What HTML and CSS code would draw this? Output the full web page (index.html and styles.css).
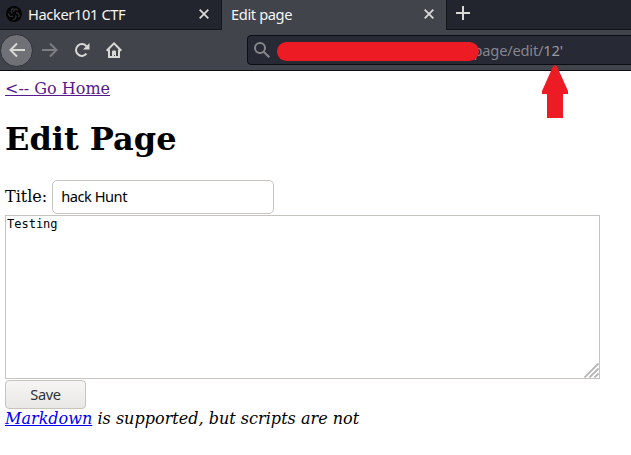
FILE: index.html
```html
<!DOCTYPE html>
<html lang="en">
<head>
<meta charset="utf-8">
<title>Edit page</title>
<link rel="stylesheet" href="styles.css">
</head>
<body>
<header class="browser">
  <div class="tabs">
    <div class="tab">
      <svg class="favicon" width="16" height="16" viewBox="0 0 16 16"><circle cx="8" cy="8" r="8" fill="#050506"/><g fill="none" stroke="#303135" stroke-width="1.3"><path d="M8 5.800C7 3.500 9.500 2 12 4M10 7c2.500-.6 4 2 2.500 4M9.500 9.500c1.500 2-.5 4.300-3 4M7 10c-2 1.600-4.500 0-4.500-2.500M6 7.500C4.500 5.500 5 3 7.500 2.500"/></g></svg>
      <span class="tab-name">Hacker101 CTF</span>
      <svg class="close" width="10" height="10" viewBox="0 0 10 10"><path d="M.7.7l8.600 8.600M9.300.7L.7 9.300"/></svg>
    </div>
    <div class="tab active">
      <span class="tab-name">Edit page</span>
      <svg class="close" width="10" height="10" viewBox="0 0 10 10"><path d="M.7.7l8.600 8.600M9.300.7L.7 9.300"/></svg>
    </div>
    <div class="new-tab"><svg width="14" height="14" viewBox="0 0 14 14"><path d="M7 0v14M0 7h14"/></svg></div>
  </div>
  <div class="toolbar">
    <div class="back"><svg width="16" height="16" viewBox="0 0 16 16"><path d="M16 8H1.500M8 1.500L1.500 8 8 14.500"/></svg></div>
    <svg class="forward" width="16" height="16" viewBox="0 0 16 16"><path d="M0 8h14.500M8 1.500L14.500 8 8 14.500"/></svg>
    <svg class="reload" width="16" height="16" viewBox="0 0 16 16"><path d="M12.500 11.700A5.900 5.900 0 1 1 12.500 4.300"/><path class="solid" d="M15.500 1v6.500H9z"/></svg>
    <svg class="home" width="16" height="16" viewBox="0 0 16 16"><path d="M.7 8.700L8 1.400l7.300 7.300M3 7.500V15h10V7.500"/><path class="solid" d="M6 15V9.500Q6 8.500 7 8.500h2q1 0 1 1V15H9v-2H8v2z"/></svg>
    <div class="address">
      <svg class="search" width="16" height="16" viewBox="0 0 16 16"><circle cx="6" cy="6" r="5"/><path d="M9.700 9.700l5.600 5.600"/></svg>
      <div class="redaction"></div>
      <span class="url">page/edit/<span class="url-end">12'</span></span>
    </div>
  </div>
</header>
<svg class="pointer" width="26" height="54" viewBox="0 0 26 54"><path d="M13 0q1.500 0 2.500 2.500L26 26v3h-5v24H5V29H0v-3L10.500 2.500Q11.500 0 13 0z"/></svg>
<main class="page">
  <a class="go-home" href="#">&lt;-- Go Home</a>
  <h1>Edit Page</h1>
  <form>
    <div class="title-row"><label for="title">Title:</label><input id="title" type="text" value="hack Hunt"></div>
    <div class="editor">
      <textarea>Testing</textarea>
      <svg class="grip" width="15" height="15" viewBox="0 0 15 15"><path d="M.5 14.500L14.500.5M5.500 14.500l9-9M10.500 14.500l4-4"/></svg>
    </div>
    <button type="button">Save</button>
  </form>
  <p class="note"><a href="#">Markdown</a> is supported, but scripts are not</p>
</main>
</body>
</html>
```
FILE: styles.css
```css
* { box-sizing: border-box; }
body {
  margin: 0;
  height: 455px;
  overflow: hidden;
  background: #fff;
  color: #000;
  font: 16px/19px "DejaVu Serif", serif;
}
.browser {
  height: 71px;
  background: #42444b;
  border-bottom: 1px solid #0c0c12;
  font: 14.667px/20px "Noto Sans", sans-serif;
  letter-spacing: -.38px;
  overflow: hidden;
}
.browser svg { display: block; flex: none; fill: none; stroke: #d8d8d5; stroke-width: 2; }
.browser .solid { fill: #d8d8d5; stroke: none; }
.tabs { display: flex; height: 30px; background: #23252e; }
.tab {
  display: flex;
  align-items: center;
  width: 222px;
  padding: 0 12px 2px 6px;
  border-right: 1px solid #15161c;
  border-bottom: 1px solid #15161c;
  color: #f5f5f2;
}
.tab.active {
  width: 224px;
  padding: 0 12px 3px 9px;
  background: #42444b;
  border-right: 0;
  border-bottom: 0;
}
.tab .favicon { stroke: none; margin-right: 6px; }
.tab .close { margin-left: auto; stroke-width: 1.8; }
.new-tab {
  flex: 1;
  padding: 6px 0 0 9px;
  border-left: 1px solid #15161c;
  border-bottom: 1px solid #15161c;
}
.toolbar { display: flex; align-items: center; height: 40px; }
.back {
  display: flex;
  flex: none;
  align-items: center;
  justify-content: center;
  width: 33px;
  height: 33px;
  border: 1px solid #303137;
  border-radius: 50%;
  background: #707176;
}
.toolbar .forward { margin-left: 9px; stroke: #7d7e82; }
.toolbar .reload { margin-left: 16px; }
.toolbar .home { margin-left: 16px; }
.address {
  display: flex;
  align-items: center;
  flex: none;
  width: 400px;
  height: 30px;
  margin-left: 125px;
  padding-left: 6px;
  border: 1px solid #0c0c12;
  border-radius: 4px;
  background: #272935;
}
.address .search { stroke: #85868a; }
.redaction {
  position: relative;
  z-index: 1;
  flex: none;
  width: 202px;
  height: 19px;
  margin: 3px -5px 0 6.5px;
  border-radius: 10px;
  background: #ed1c24;
}
.url { color: #85868b; letter-spacing: -.2px; }
.url-end { color: #999a9e; }
.pointer { position: absolute; left: 542px; top: 65px; fill: #ed1c24; }
.page { padding: 8px 5px 0; }
.page a { color: #0000ee; text-decoration: underline; }
.page .go-home { display: block; width: max-content; color: #551a8b; }
h1 { margin: 22px 0 21px; font-size: 32px; line-height: 39px; }
.title-row { display: flex; align-items: flex-start; height: 35px; line-height: 33px; }
input {
  width: 222px;
  height: 34px;
  margin: 0 0 0 5px;
  padding: 0 8px 2px;
  border: 1px solid #c7c3be;
  border-radius: 5px;
  background: #fff;
  color: #000;
  font: 14.667px "Noto Sans", sans-serif;
  letter-spacing: -.5px;
}
.editor { position: relative; width: 595px; height: 164px; }
textarea {
  display: block;
  width: 100%;
  height: 100%;
  padding: 1px;
  border: 1px solid #c7c3be;
  border-radius: 0;
  resize: none;
  background: #fff;
  color: #000;
  font: 12px/14px "DejaVu Sans Mono", monospace;
}
.grip { position: absolute; right: 1px; bottom: 1px; fill: none; stroke: #b4b4b4; stroke-width: 1.8; }
button {
  display: block;
  width: 81px;
  height: 29px;
  margin-top: 1px;
  padding: 0 0 1px;
  border: 1px solid #c7c3be;
  border-radius: 4px;
  background: linear-gradient(#f6f5f4, #e9e8e6);
  color: #2e3436;
  font: 14.667px/20px "Noto Sans", sans-serif;
  letter-spacing: -.4px;
}
.note { margin: 0; font-style: italic; letter-spacing: .02px; }
```
